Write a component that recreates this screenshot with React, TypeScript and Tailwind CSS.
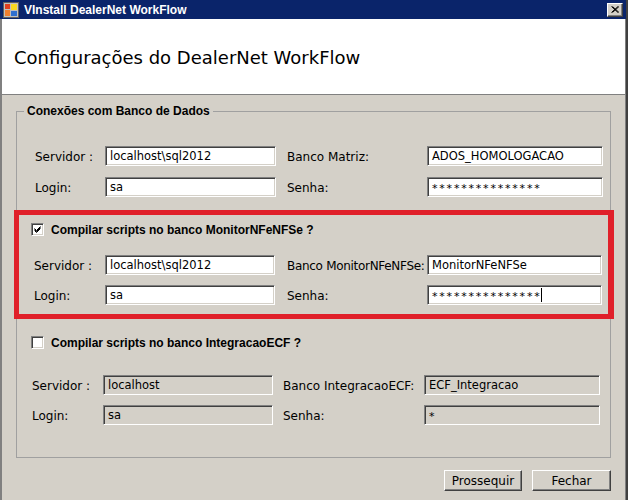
import React from "react";

type InputProps = {
  value: string;
  w: string;
  disabled?: boolean;
  pw?: boolean;
  caret?: boolean;
};

function Input({ value, w, disabled, pw, caret }: InputProps) {
  return (
    <div
      className={`h-[20px] ${w} shrink-0 flex items-center pl-[4px] border border-t-[#808080] border-l-[#808080] border-r-white border-b-white shadow-[inset_1px_1px_0_#404040,inset_-1px_-1px_0_#d4d0c8] ${
        disabled ? "bg-[#d4d0c8]" : "bg-white"
      } text-[11.5px] leading-none whitespace-nowrap overflow-hidden`}
    >
      <span className={pw ? "tracking-[1.8px] text-[11px] pt-[3px]" : "pt-[1px]"}>{value}</span>
      {caret && <span className="w-px h-[14px] bg-black -ml-[1px]" />}
    </div>
  );
}

type RowProps = {
  pl: string;
  lw1: string;
  iw1: string;
  gap: string;
  lw2: string;
  iw2: string;
  l1: string;
  v1: string;
  l2: string;
  v2: string;
  l2cls?: string;
  disabled?: boolean;
  pw?: boolean;
  caret?: boolean;
  cls?: string;
};

function Row(p: RowProps) {
  return (
    <div className={`flex items-center h-[20px] ${p.pl} ${p.cls ?? ""}`}>
      <div className={`${p.lw1} shrink-0 text-[12px] whitespace-nowrap pt-[1px]`}>{p.l1}</div>
      <Input value={p.v1} w={p.iw1} disabled={p.disabled} />
      <div className={`${p.gap} ${p.lw2} shrink-0 text-[12px] whitespace-nowrap pt-[1px] ${p.l2cls ?? ""}`}>{p.l2}</div>
      <Input value={p.v2} w={p.iw2} disabled={p.disabled} pw={p.pw} caret={p.caret} />
    </div>
  );
}

function Checkbox({ checked }: { checked: boolean }) {
  return (
    <div className="w-[13px] h-[13px] shrink-0 bg-white border border-t-[#808080] border-l-[#808080] border-r-white border-b-white shadow-[inset_1px_1px_0_#404040,inset_-1px_-1px_0_#d4d0c8] flex items-center justify-center">
      {checked && (
        <svg width="9" height="9" viewBox="0 0 9 9">
          <path d="M1.5 3.5 L3.5 5.5 L7.5 1.5 M1.5 4.5 L3.5 6.5 L7.5 2.5 M1.5 5.5 L3.5 7.5 L7.5 3.5" stroke="#000" strokeWidth="1" fill="none" />
        </svg>
      )}
    </div>
  );
}

export default function App() {
  const bold = "font-['Liberation_Sans',Arial,sans-serif] font-bold text-[12px]";
  return (
    <div className="w-[628px] h-[500px] overflow-hidden bg-[#d4d0c8] flex flex-col border-r-[2px] border-r-[#404040] font-['DejaVu_Sans',sans-serif] text-black">
      {/* Title bar */}
      <div className="h-[19px] shrink-0 flex items-center bg-[#0a246a] pl-[3px] pr-[3px]">
        <svg width="16" height="16" viewBox="0 0 16 16" className="shrink-0">
          <rect x="0.5" y="0.5" width="15" height="15" fill="#c0c0c0" stroke="#606060" />
          <rect x="2" y="2" width="5" height="5" fill="#e04020" />
          <rect x="2" y="8" width="5" height="6" fill="#f08030" />
          <rect x="8" y="2" width="6" height="6" fill="#f8d820" />
          <rect x="8" y="9" width="6" height="5" fill="#3070d0" />
        </svg>
        <span className="ml-[5px] text-white font-['Liberation_Sans',Arial,sans-serif] font-bold text-[12px] leading-none">
          VInstall DealerNet WorkFlow
        </span>
        <div className="ml-auto w-[16px] h-[14px] bg-[#d4d0c8] border border-t-white border-l-white border-r-[#404040] border-b-[#404040] shadow-[inset_-1px_-1px_0_#808080] flex items-center justify-center">
          <svg width="8" height="7" viewBox="0 0 8 7">
            <path d="M0.5 0.5 L7 6.5 M1.5 0.5 L8 6.5 M7 0.5 L0.5 6.5 M8 0.5 L1.5 6.5" stroke="#000" strokeWidth="1" />
          </svg>
        </div>
      </div>

      {/* Content */}
      <div className="flex-1 flex flex-col border-l-[2px] border-l-[#808080] border-r-[1px] border-r-[#808080]">
        {/* Header */}
        <div className="h-[76px] shrink-0 bg-white border-b border-b-[#808080] flex items-center pl-[12px]">
          <h1 className="text-[18px] font-normal leading-none pt-[2px]">Configurações do DealerNet WorkFlow</h1>
        </div>

        {/* Body */}
        <div className="flex-1 flex flex-col pt-[9px]">
          <fieldset className="ml-[14px] w-[595px] h-[354px] border border-[#a0a0a0]">
            <legend className={`ml-[7px] px-[3px] leading-[14px] ${bold}`}>Conexões com Banco de Dados</legend>

            <div className="flex flex-col gap-[11px] mt-[28px]">
              <Row
                pl="pl-[18px]"
                lw1="w-[70px]"
                iw1="w-[171px]"
                gap="ml-[11px]"
                lw2="w-[140px]"
                iw2="w-[176px]"
                l1="Servidor :"
                v1="localhost\sql2012"
                l2="Banco Matriz:"
                v2="ADOS_HOMOLOGACAO"
              />
              <Row
                pl="pl-[18px]"
                lw1="w-[70px]"
                iw1="w-[171px]"
                gap="ml-[11px]"
                lw2="w-[140px]"
                iw2="w-[176px]"
                l1="Login:"
                v1="sa"
                l2="Senha:"
                v2="***************"
                pw
              />
            </div>

            {/* Highlighted section */}
            <div className="mt-[13px] -ml-[3px] -mr-[4px] border-[5px] border-r-[6px] border-[#e0202a] pt-[8px] pb-[9px]">
              <div className="flex items-center h-[13px] pl-[12px]">
                <Checkbox checked />
                <span className={`ml-[7px] leading-none ${bold}`}>Compilar scripts no banco MonitorNFeNFSe ?</span>
              </div>
              <div className="flex flex-col gap-[10px] mt-[19px]">
                <Row
                  pl="pl-[15px]"
                  lw1="w-[71px]"
                  iw1="w-[170px]"
                  gap="ml-[12px]"
                  lw2="w-[140px]"
                  iw2="w-[175px]"
                  l1="Servidor :"
                  v1="localhost\sql2012"
                  l2="Banco MonitorNFeNFSe:"
                  l2cls="tracking-[-0.3px]"
                  v2="MonitorNFeNFSe"
                />
                <Row
                  pl="pl-[15px]"
                  lw1="w-[71px]"
                  iw1="w-[170px]"
                  gap="ml-[12px]"
                  lw2="w-[140px]"
                  iw2="w-[175px]"
                  l1="Login:"
                  v1="sa"
                  l2="Senha:"
                  v2="***************"
                  pw
                  caret
                />
              </div>
            </div>

            {/* Third section */}
            <div className="mt-[17px] flex items-center h-[13px] pl-[14px]">
              <Checkbox checked={false} />
              <span className={`ml-[7px] leading-none ${bold}`}>Compilar scripts no banco IntegracaoECF ?</span>
            </div>
            <div className="flex flex-col gap-[10px] mt-[26px]">
              <Row
                pl="pl-[15px]"
                lw1="w-[71px]"
                iw1="w-[170px]"
                gap="ml-[10px]"
                lw2="w-[141px]"
                iw2="w-[176px]"
                l1="Servidor :"
                v1="localhost"
                l2="Banco IntegracaoECF:"
                v2="ECF_Integracao"
                disabled
              />
              <Row
                pl="pl-[15px]"
                lw1="w-[71px]"
                iw1="w-[170px]"
                gap="ml-[10px]"
                lw2="w-[141px]"
                iw2="w-[176px]"
                l1="Login:"
                v1="sa"
                l2="Senha:"
                v2="*"
                disabled
                pw
              />
            </div>
          </fieldset>

          {/* Buttons */}
          <div className="ml-[14px] w-[595px] mt-[12px] flex justify-end gap-[10px]">
            <button className="w-[78px] h-[21px] bg-[#d4d0c8] border border-t-white border-l-white border-r-[#404040] border-b-[#404040] shadow-[inset_-1px_-1px_0_#808080] text-[12px] leading-none">
              Prossequir
            </button>
            <button className="w-[79px] h-[21px] bg-[#d4d0c8] border border-t-white border-l-white border-r-[#404040] border-b-[#404040] shadow-[inset_-1px_-1px_0_#808080] text-[12px] leading-none">
              Fechar
            </button>
          </div>
        </div>
      </div>
    </div>
  );
}
